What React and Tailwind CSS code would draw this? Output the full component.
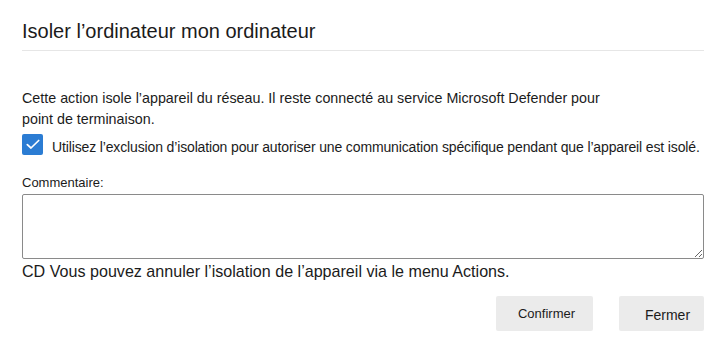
import React from "react";

export default function App() {
  return (
    <div className="w-[726px] h-[351px] bg-white px-[22px] font-['Liberation_Sans',Arial,sans-serif] text-[#1b1b1b] overflow-hidden">
      <h1 className="pt-[17px] text-[20px] leading-[28px] font-normal">Isoler l’ordinateur mon ordinateur</h1>
      <div className="mt-[5px] h-px bg-[#e6e6e6]" />
      <p className="mt-[37px] max-w-[600px] text-[14.3px] leading-[21px]">
        Cette action isole l’appareil du réseau. Il reste connecté au service Microsoft Defender pour point de terminaison.
      </p>
      <div className="mt-[4px] flex items-start gap-[9px]">
        <div className="w-[21px] h-[21px] rounded-[2px] bg-[#2b7cd3] flex items-center justify-center shrink-0">
          <svg width="14" height="11" viewBox="0 0 14 11" fill="none">
            <path d="M1.3 5.6 L5 9 L12.7 1.5" stroke="white" strokeWidth="1.7" strokeLinecap="round" strokeLinejoin="round" />
          </svg>
        </div>
        <span className="pt-[3px] text-[14px] leading-[21px] whitespace-nowrap tracking-[-0.14px]">
          Utilisez l’exclusion d’isolation pour autoriser une communication spécifique pendant que l’appareil est isolé.
        </span>
      </div>
      <div className="mt-[17px] text-[13px] leading-[16px]">Commentaire:</div>
      <textarea className="mt-[3px] block w-full h-[65px] border border-[#8a8a8a] rounded-[2px] bg-white outline-none" />
      <div className="mt-[2px] text-[16.1px] leading-[20px]">CD Vous pouvez annuler l’isolation de l’appareil via le menu Actions.</div>
      <div className="mt-[15px] flex justify-end gap-[26px]">
        <button className="w-[97px] h-[35px] bg-[#ebebeb] rounded-[2px] text-[13px] flex items-center justify-center pl-[4px] text-[#1b1b1b]">Confirmer</button>
        <button className="w-[85px] h-[35px] bg-[#ebebeb] rounded-[2px] text-[14px] flex items-center justify-center pl-[12px] pt-[3px] text-[#1b1b1b]">Fermer</button>
      </div>
    </div>
  );
}
